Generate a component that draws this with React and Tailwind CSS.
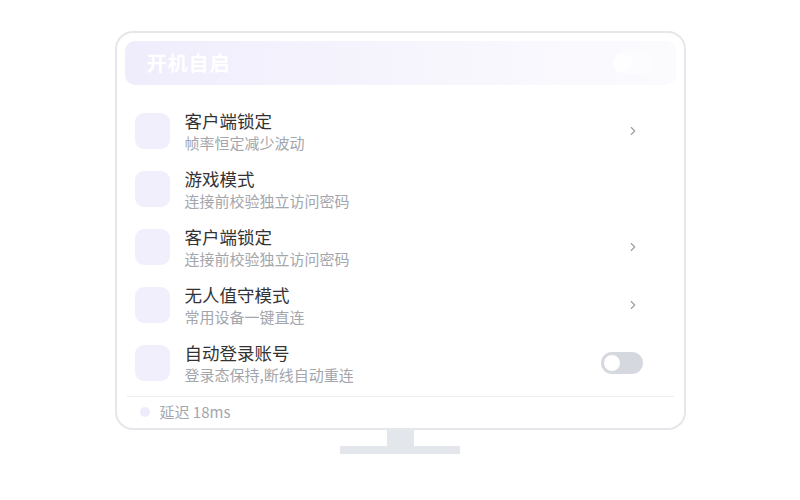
import { ChevronRight } from 'lucide-react';

const rows = [
  { title: '客户端锁定', sub: '帧率恒定减少波动', action: 'chevron' },
  { title: '游戏模式', sub: '连接前校验独立访问密码', action: null },
  { title: '客户端锁定', sub: '连接前校验独立访问密码', action: 'chevron' },
  { title: '无人值守模式', sub: '常用设备一键直连', action: 'chevron' },
  { title: '自动登录账号', sub: '登录态保持,断线自动重连', action: 'toggle' },
];

function Toggle({ faint }) {
  if (faint) {
    return (
      <div className="w-[42px] h-[22px] rounded-full p-[2px] flex items-center bg-white/40">
        <div className="w-[18px] h-[18px] rounded-full bg-white/80" />
      </div>
    );
  }
  return (
    <div className="w-[42px] h-[22px] rounded-full p-[2px] flex items-center bg-[#d5d8de]">
      <div className="w-[18px] h-[18px] rounded-full bg-white border border-[#d5d8de]" />
    </div>
  );
}

export default function App() {
  return (
    <div
      className="w-[800px] h-[500px] bg-white pt-[31px] flex flex-col items-center"
      style={{ fontFamily: '"Noto Sans CJK SC", "Noto Sans", sans-serif' }}
    >
      {/* Screen */}
      <div className="w-[571px] h-[399px] rounded-[18px] border-2 border-[#e5e7eb] bg-white px-[8px] pt-[8px] flex flex-col">
        <div className="h-[45px] rounded-[10px] bg-gradient-to-r from-[#efedfc] via-[#f6f5fd] to-[#fbfbfe] flex items-center justify-between pl-[22px] pr-[22px]">
          <span className="text-white text-[20px] font-bold tracking-[1px]">开机自启</span>
          <Toggle faint />
        </div>

        <div className="flex flex-col pt-[17px]">
          {rows.map((r, i) => (
            <div key={i} className="h-[58px] flex items-center pl-[10px] pr-[33px]">
              <div className="w-[35px] h-[36px] rounded-[9px] bg-[#f1effc] shrink-0" />
              <div className="ml-[15px] flex flex-col flex-1 mt-[1px]">
                <span className="text-[17.5px] leading-[22px] text-[#333333]">{r.title}</span>
                <span className="text-[15px] leading-[21px] text-[#a3a6ad]">{r.sub}</span>
              </div>
              {r.action === 'chevron' && (
                <ChevronRight size={14} strokeWidth={2} className="text-[#9aa0a8] mr-[3px]" />
              )}
              {r.action === 'toggle' && <Toggle />}
            </div>
          ))}
        </div>

        <div className="mt-[4px] border-t border-[#eceef1] mx-[2px] h-[33px] flex items-center pl-[13px]">
          <div className="w-[10px] h-[10px] rounded-full bg-[#eeebfc]" />
          <span className="ml-[10px] text-[15px] text-[#a3a6ad]">延迟 18ms</span>
        </div>
      </div>

      {/* Stand */}
      <div className="w-[27px] h-[16px] bg-[#e3e6ea]" />
      <div className="w-[120px] h-[8px] bg-[#e3e6ea]" />
    </div>
  );
}
